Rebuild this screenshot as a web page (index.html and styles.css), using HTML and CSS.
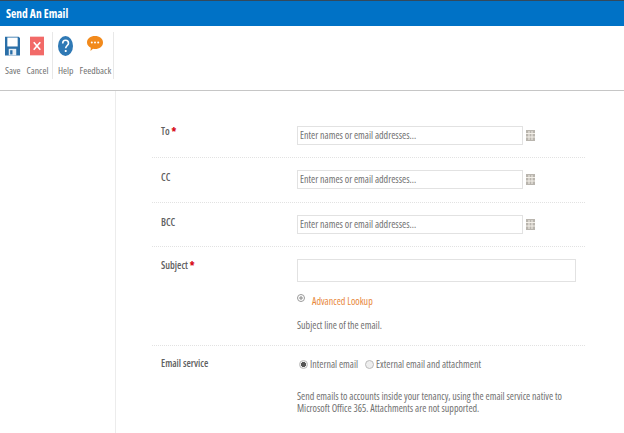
FILE: index.html
```html
<!DOCTYPE html>
<html lang="en">
<head>
<meta charset="utf-8">
<title>Send An Email</title>
<link rel="stylesheet" href="styles.css">
</head>
<body>
<header class="title-bar">Send An Email</header>
<div class="toolbar">
  <div class="tool-group first">
    <div class="tool">
      <svg class="icon" width="15" height="20" viewBox="0 0 16 20"><path d="M0 0h14.500l1.500 1.500V20H0z" fill="#2a6fa8"/><rect x="2.500" y="1" width="11" height="9.500" fill="#fff"/><rect x="4" y="13" width="8" height="7" fill="#e8eef4"/><rect x="5.500" y="14.500" width="2.500" height="4.500" fill="#2a6fa8"/></svg>
      <span>Save</span>
    </div>
    <div class="tool">
      <svg class="icon" width="14" height="20" viewBox="0 0 15 20"><rect width="15" height="20" fill="#f26a68"/><path d="M4 6l7 8M11 6l-7 8" stroke="#fff" stroke-width="1.800" fill="none"/></svg>
      <span>Cancel</span>
    </div>
  </div>
  <div class="tool-group">
    <div class="tool">
      <svg class="icon" width="15" height="20" viewBox="0 0 15 20"><ellipse cx="7.500" cy="10" rx="7.500" ry="10" fill="#2f79b5"/><path d="M4.700 7.500C4.700 5.500 6 4.300 7.600 4.300S10.500 5.500 10.500 7.200C10.500 9.300 7.700 9.800 7.700 12.300" stroke="#fff" stroke-width="1.600" fill="none"/><rect x="6.800" y="14" width="1.800" height="2" fill="#fff"/></svg>
      <span>Help</span>
    </div>
    <div class="tool">
      <svg class="icon" width="16" height="20" viewBox="0 0 16 20"><path d="M8 0c4.500 0 8 2.600 8 6.500S12.500 13 8 13c-.7 0-1.300 0-2-.2L3.500 15l.3-3.200C1.500 10.700 0 8.800 0 6.500 0 2.600 3.500 0 8 0z" fill="#f28a1c"/><circle cx="4.800" cy="6.500" r="1" fill="#fff"/><circle cx="8" cy="6.500" r="1" fill="#fff"/><circle cx="11.200" cy="6.500" r="1" fill="#fff"/></svg>
      <span>Feedback</span>
    </div>
  </div>
</div>
<div class="content">
  <aside class="side"></aside>
  <main class="form">
    <div class="row row-pick row-to">
      <div class="label">To <b>*</b></div>
      <div class="field pick"><div class="input">Enter names or email addresses...</div><svg class="book" width="9" height="11" viewBox="0 0 9 11"><rect width="9" height="11" fill="#b9b5ae"/><path d="M3 1v9M6 1v9M0 3.500h9M0 7h9" stroke="#f3efe8"/></svg></div>
    </div>
    <div class="row row-pick">
      <div class="label">CC</div>
      <div class="field pick"><div class="input">Enter names or email addresses...</div><svg class="book" width="9" height="11" viewBox="0 0 9 11"><rect width="9" height="11" fill="#b9b5ae"/><path d="M3 1v9M6 1v9M0 3.500h9M0 7h9" stroke="#f3efe8"/></svg></div>
    </div>
    <div class="row row-pick row-bcc">
      <div class="label">BCC</div>
      <div class="field pick"><div class="input">Enter names or email addresses...</div><svg class="book" width="9" height="11" viewBox="0 0 9 11"><rect width="9" height="11" fill="#b9b5ae"/><path d="M3 1v9M6 1v9M0 3.500h9M0 7h9" stroke="#f3efe8"/></svg></div>
    </div>
    <div class="row row-subject">
      <div class="label">Subject <b>*</b></div>
      <div class="field">
        <div class="input wide"></div>
        <div class="lookup"><svg width="8" height="8" viewBox="0 0 8 8"><circle cx="4" cy="4" r="3.500" fill="none" stroke="#999"/><path d="M2 4h4M4 2v4" stroke="#888"/></svg><span>Advanced Lookup</span></div>
        <p class="hint">Subject line of the email.</p>
      </div>
    </div>
    <div class="row row-last">
      <div class="label">Email service</div>
      <div class="field">
        <div class="radios">
          <span class="radio on"></span><span class="radio-text">Internal email</span>
          <span class="radio"></span><span>External email and attachment</span>
        </div>
        <p class="desc">Send emails to accounts inside your tenancy, using the email service native to Microsoft Office 365. Attachments are not supported.</p>
      </div>
    </div>
  </main>
</div>
</body>
</html>
```

FILE: styles.css
```css
html, body { margin: 0; padding: 0; }
body {
  width: 624px;
  height: 433px;
  overflow: hidden;
  background: #fff;
  color: #707070;
  font-family: "Open Sans", sans-serif;
  font-stretch: 75%;
  font-size: 10px;
  line-height: 12px;
}
.title-bar {
  height: 25px;
  border-top: 1px solid #33495c;
  background: #0072c6;
  color: #fff;
  font-weight: bold;
  font-size: 11.500px;
  line-height: 26px;
  padding-left: 6px;
}
.toolbar {
  display: flex;
  height: 64px;
  border-bottom: 1px solid #c6c6c6;
}
.tool-group {
  display: flex;
  gap: 6px;
  box-sizing: border-box;
  width: 61px;
  height: 47px;
  margin-top: 6px;
  padding: 4px 0 0 5px;
  border-right: 1px solid #e8e8e8;
}
.tool-group.first { width: 53px; }
.tool {
  display: flex;
  flex-direction: column;
  align-items: center;
  font-size: 9.700px;
}
.icon { margin-bottom: 9px; }
.content { display: flex; height: 342px; }
.side { width: 115px; border-right: 1px solid #ececec; flex: none; }
.form { padding-left: 36px; width: 433px; flex: none; }
.row {
  display: flex;
  border-bottom: 1px dotted #e2e2e2;
}
.row-pick { height: 44px; }
.row-to { height: 66px; }
.row-bcc { height: 43px; }
.label {
  width: 145px;
  flex: none;
  padding: 13px 0 0 9px;
  box-sizing: border-box;
  color: #606060;
  font-weight: 600;
}
.row-to .label { padding-top: 34px; }
.label b { color: #d8101c; }
.field { flex: 1; padding-top: 12px; }
.row-to .field { padding-top: 35px; }
.pick { display: flex; align-items: center; align-self: flex-start; }
.input {
  width: 226px;
  height: 19px;
  box-sizing: border-box;
  border: 1px solid #e2e2e2;
  padding-left: 2px;
  line-height: 17px;
}
.input.wide { width: 279px; height: 23px; }
.book { margin-left: 3px; }
.row-subject { height: 98px; }
.row-subject .label { padding-top: 12px; }
.lookup { display: flex; align-items: flex-start; gap: 7px; margin-top: 12px; color: #e8873a; }
.lookup span { margin-top: 1px; }
.hint { margin: 12px 0 0; }
.row-last { border-bottom: none; }
.row-last .label { padding-top: 11px; }
.radios { display: flex; align-items: center; margin-left: 2px; }
.radio {
  width: 7px;
  height: 7px;
  border-radius: 50%;
  border: 1px solid #bbb;
  background: #eee;
  margin-right: 2px;
}
.radio.on { background: radial-gradient(circle, #555 45%, #eee 55%); }
.radio-text { margin-right: 7px; }
.desc { margin: 20px 0 0; width: 280px; }
```
